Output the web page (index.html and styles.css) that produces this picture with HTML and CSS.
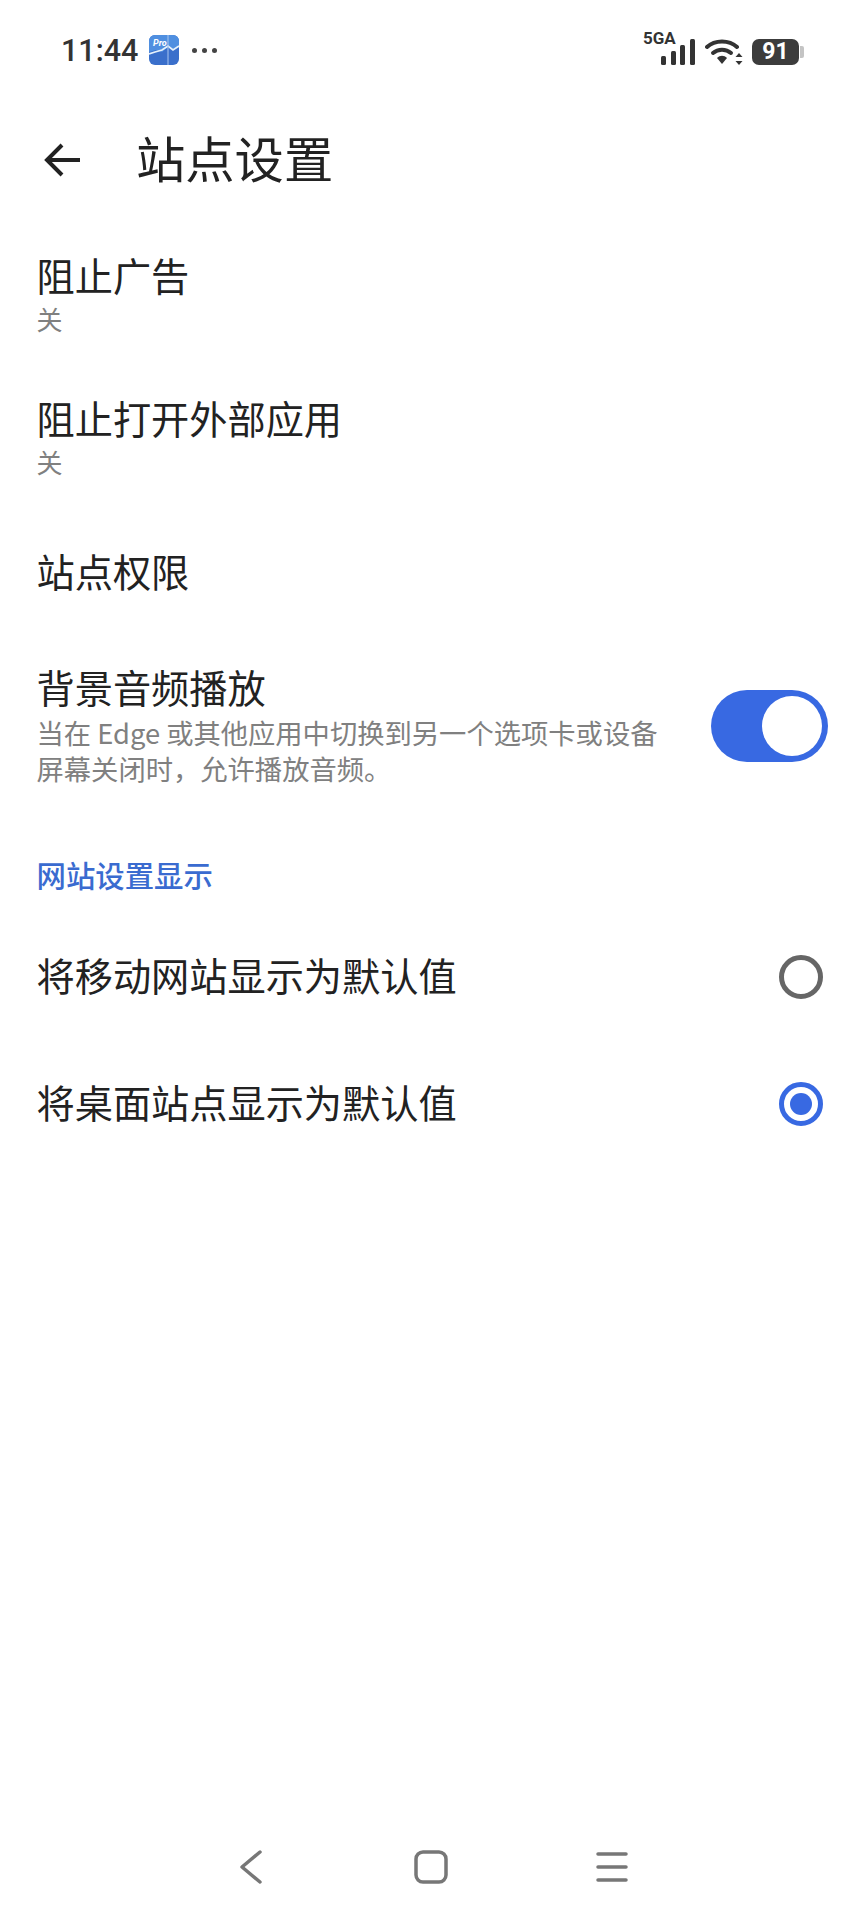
FILE: index.html
```html
<!DOCTYPE html>
<html lang="zh-CN">

<head>
    <meta charset="UTF-8">
    <meta name="viewport" content="width=device-width, initial-scale=1.0">
    <title>站点设置</title>
    <link rel="stylesheet" href="styles.css">
</head>

<body>
    <div class="page">
        <!--status bar-->
        <div class="status">
            <div class="status-left">
                <span class="time">11:44</span>
                <svg class="app-icon" width="30" height="30" viewBox="0 0 30 30">
                    <rect width="30" height="30" rx="6" fill="#3a6fcb"/>
                    <path d="M0 6a6 6 0 0 1 6-6h18a6 6 0 0 1 6 6v6l-5 3-6-3-6 5-6-2-7 2z" fill="#4f8fe0"/>
                    <path d="M0 19l6-2 7-2 6-4 5 4 6-4" fill="none" stroke="#e6f1fb" stroke-width="1.800"/>
                    <text class="app-icon-text" x="4" y="11">Pro</text>
                    <path d="M19 0v30" stroke="#a9c6ee" stroke-width="1"/>
                </svg>
                <span class="dots"><i></i><i></i><i></i></span>
            </div>
            <div class="status-right">
                <div class="signal">
                    <span class="net">5GA</span>
                    <svg width="34" height="26" viewBox="0 0 34 26">
                        <rect x="0" y="17" width="5" height="9" rx="1.500" fill="#333"/>
                        <rect x="10" y="12" width="5" height="14" rx="1.500" fill="#333"/>
                        <rect x="19" y="6" width="5" height="20" rx="1.500" fill="#333"/>
                        <rect x="29" y="0" width="5" height="26" rx="1.500" fill="#333"/>
                    </svg>
                </div>
                <svg class="wifi" width="38" height="26" viewBox="0 0 38 26">
                    <path d="M2 8C10 .5 24 .5 32 8" fill="none" stroke="#333" stroke-width="4" stroke-linecap="round"/>
                    <path d="M8 14C13 9.500 21 9.500 26 14" fill="none" stroke="#333" stroke-width="4" stroke-linecap="round"/>
                    <path d="M12 19C15 16 19 16 22 19L17 25z" fill="#333"/>
                    <path d="M34 14l3.500 4h-7zM34 26l3.500-4h-7z" fill="#333"/>
                </svg>
                <div class="battery">
                    <span class="battery-body">91</span>
                    <span class="battery-cap"></span>
                </div>
            </div>
        </div>

        <!--title bar-->
        <div class="titlebar">
            <svg class="back" width="38" height="36" viewBox="0 0 38 36">
                <path d="M36 18H3M18 3L3 18l15 15" fill="none" stroke="#222" stroke-width="4"/>
            </svg>
            <h1>站点设置</h1>
        </div>

        <div class="item item-first">
            <div class="item-title">阻止广告</div>
            <div class="item-sub">关</div>
        </div>
        <div class="item">
            <div class="item-title">阻止打开外部应用</div>
            <div class="item-sub">关</div>
        </div>
        <div class="item item-single">
            <div class="item-title">站点权限</div>
        </div>

        <div class="item item-toggle">
            <div class="item-text">
                <div class="item-title">背景音频播放</div>
                <div class="item-desc">当在 Edge 或其他应用中切换到另一个选项卡或设备<br>屏幕关闭时，允许播放音频。</div>
            </div>
            <div class="switch"><span class="knob"></span></div>
        </div>

        <h2>网站设置显示</h2>

        <div class="option">
            <span class="option-label">将移动网站显示为默认值</span>
            <span class="radio"></span>
        </div>
        <div class="option">
            <span class="option-label">将桌面站点显示为默认值</span>
            <span class="radio radio-on"></span>
        </div>

        <!--android nav bar-->
        <div class="navbar">
            <svg width="24" height="34" viewBox="0 0 24 34">
                <path d="M21 2L3 17l18 15" fill="none" stroke="#777" stroke-width="3.500" stroke-linecap="round" stroke-linejoin="round"/>
            </svg>
            <svg class="nav-home" width="34" height="34" viewBox="0 0 34 34">
                <rect x="2" y="2" width="30" height="30" rx="7" fill="none" stroke="#777" stroke-width="3.500"/>
            </svg>
            <svg width="32" height="32" viewBox="0 0 32 32">
                <path d="M2 3h28M2 16h28M2 29h28" fill="none" stroke="#777" stroke-width="3.500" stroke-linecap="round"/>
            </svg>
        </div>
    </div>
</body>

</html>
```

FILE: styles.css
```css
* {
    box-sizing: border-box;
}

body {
    margin: 0;
    background-color: #fff;
    font-family: "Noto Sans CJK SC", "Noto Sans", sans-serif;
    color: #222;
}

.page {
    display: flex;
    flex-direction: column;
    height: 1920px;
    overflow: hidden;
}

.status {
    display: flex;
    justify-content: space-between;
    align-items: center;
    height: 50px;
    margin-top: 25px;
    padding: 0 60px 0 61px;
}

.status-left {
    display: flex;
    align-items: center;
}

.time {
    font-family: Roboto, sans-serif;
    font-size: 30.500px;
    font-weight: 500;
    color: #333;
}

.app-icon {
    margin-left: 11px;
}

.app-icon-text {
    font-family: Roboto, sans-serif;
    font-size: 9px;
    font-style: italic;
    font-weight: 700;
    fill: #fff;
}

.dots {
    display: flex;
    gap: 5px;
    margin-left: 13px;
}

.dots i {
    width: 5px;
    height: 5px;
    border-radius: 50%;
    background-color: #444;
}

.status-right {
    display: flex;
    align-items: center;
}

.signal {
    position: relative;
    width: 52px;
    height: 30px;
    display: flex;
    justify-content: flex-end;
    align-items: flex-end;
}

.net {
    position: absolute;
    left: 0;
    top: -7px;
    font-family: Roboto, sans-serif;
    font-size: 17px;
    font-weight: 700;
    line-height: 20px;
    color: #333;
}

.wifi {
    margin-top: 4px;
    margin-left: 10px;
}

.battery {
    display: flex;
    align-items: center;
    margin-top: 4px;
    margin-left: 9px;
}

.battery-body {
    width: 47px;
    height: 26px;
    border-radius: 7px;
    background-color: #3c3c3c;
    color: #fff;
    font-family: Roboto, sans-serif;
    font-size: 23px;
    font-weight: 700;
    line-height: 26px;
    text-align: center;
}

.battery-cap {
    width: 4px;
    height: 12px;
    margin-left: 1px;
    border-radius: 0 2px 2px 0;
    background-color: #c4c4c4;
}

.titlebar {
    display: flex;
    align-items: center;
    height: 70px;
    margin-top: 49px;
    padding-left: 44px;
}

.back {
    margin-top: 2px;
}

.titlebar h1 {
    margin: 0 0 4px 54px;
    font-size: 49.300px;
    font-weight: 400;
    line-height: 70px;
}

.item {
    padding: 0 36px 0 36.500px;
}

.item-first {
    margin-top: 52px;
}

.item-title {
    font-size: 38.200px;
    line-height: 58px;
}

.item-sub {
    margin-bottom: 55px;
    font-size: 26px;
    line-height: 30px;
    color: #808080;
}

.item-single {
    margin-top: 10px;
}

.item-toggle {
    display: flex;
    justify-content: space-between;
    align-items: center;
    margin-top: 58px;
}

.item-desc {
    margin-top: -2px;
    font-size: 27.300px;
    line-height: 36px;
    color: #808080;
}

.switch {
    display: flex;
    justify-content: flex-end;
    align-items: center;
    width: 117px;
    height: 72px;
    margin-top: 7px;
    padding-right: 6px;
    border-radius: 36px;
    background-color: #3869e2;
}

.knob {
    width: 60px;
    height: 60px;
    border-radius: 50%;
    background-color: #fff;
}

h2 {
    margin: 68px 0 19px;
    padding: 0 36.500px;
    font-size: 29.400px;
    font-weight: 500;
    line-height: 40px;
    color: #3a6bd0;
}

.option {
    display: flex;
    justify-content: space-between;
    align-items: center;
    height: 127px;
    padding: 0 36px 0 36.500px;
    font-size: 38.200px;
}

.option-label {
    margin-bottom: 5px;
}

.radio {
    width: 44px;
    height: 44px;
    margin-right: 5px;
    border: 5px solid #666;
    border-radius: 50%;
}

.radio-on {
    display: flex;
    justify-content: center;
    align-items: center;
    border-color: #3869e2;
}

.radio-on::after {
    content: "";
    width: 22px;
    height: 22px;
    border-radius: 50%;
    background-color: #3869e2;
}

.navbar {
    display: flex;
    justify-content: space-between;
    align-items: center;
    margin-top: auto;
    margin-bottom: 36px;
    padding: 0 236px 0 239px;
}

.nav-home {
    margin-left: 3px;
}
```
